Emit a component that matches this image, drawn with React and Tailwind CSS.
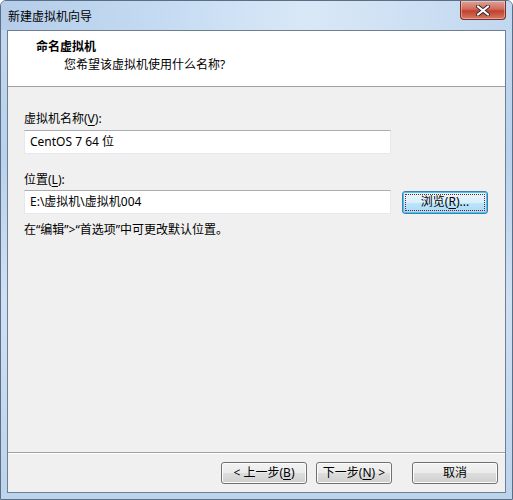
const Key = ({ children }) => <span className="underline underline-offset-2">{children}</span>;

const WinButton = ({ children, className = '' }) => (
  <button
    type="button"
    className={`h-[22px] rounded-[3px] border border-[#707070] bg-[linear-gradient(#f2f2f2_0%,#ebebeb_50%,#dddddd_51%,#cfcfcf_100%)] text-[12px] leading-none text-black shadow-[inset_0_0_0_1px_#fcfcfc] ${className}`}
  >
    {children}
  </button>
);

const TextBox = ({ value }) => (
  <div className="flex h-[24px] w-[367px] items-center border border-[#e3e9ef] border-t-[#abadb3] bg-white px-[5px] text-[12px] text-black">
    {value}
  </div>
);

export default function App() {
  return (
    <div
      className="relative h-[500px] w-[513px] overflow-hidden rounded-t-[6px] border border-[#5a6f86] bg-[linear-gradient(180deg,#c6daf0_0%,#b9d1ec_30%,#cfe0f3_60%,#bcd3ec_100%)] text-[12px]"
      style={{ fontFamily: '"Noto Sans", "Noto Sans CJK SC", sans-serif' }}
    >
      {/* title bar */}
      <div className="flex h-[29px] items-center justify-between bg-[linear-gradient(90deg,#b5cde9_0%,#c4daf2_30%,#d9e8f7_60%,#c1d7ef_100%)]">
        <span className="pl-[7px] pt-[2px] text-[12px] text-black">新建虚拟机向导</span>
        <div className="mb-[10px] mr-[6px] flex h-[19px] w-[46px] items-center justify-center self-start rounded-b-[4px] border border-t-0 border-[#7a2f2a] bg-[linear-gradient(#e0a197_0%,#d06b5c_45%,#c0402e_55%,#d57a62_100%)] shadow-[inset_0_0_0_1px_rgba(255,255,255,0.35)]">
          <svg width="14" height="11" viewBox="0 0 14 11">
            <path d="M2 1.5 L12 9.5 M12 1.5 L2 9.5" stroke="#3a2a2a" strokeWidth="4" strokeLinecap="round" />
            <path d="M2 1.5 L12 9.5 M12 1.5 L2 9.5" stroke="#ffffff" strokeWidth="2.2" strokeLinecap="round" />
          </svg>
        </div>
      </div>

      {/* client area */}
      <div className="mx-[6px] flex h-[463px] flex-col border border-[#6f7f91] bg-[#f0f0f0]">
        {/* header */}
        <div className="h-[56px] border-b border-[#a0a0a0] bg-white pl-[28px] pt-[7px]">
          <div className="text-[12px] font-bold leading-[18px] text-black">命名虚拟机</div>
          <div className="pl-[28px] text-[12px] leading-[18px] text-black">您希望该虚拟机使用什么名称?</div>
        </div>

        {/* body */}
        <div className="flex flex-1 flex-col pl-[16px]">
          <div className="mt-[24px] leading-[16px]">
            虚拟机名称(<Key>V</Key>):
          </div>
          <div className="mt-[3px]">
            <TextBox value="CentOS 7 64 位" />
          </div>

          <div className="mt-[18px] leading-[16px]">
            位置(<Key>L</Key>):
          </div>
          <div className="mt-[2px] flex items-center gap-[11px]">
            <TextBox value="E:\虚拟机\虚拟机004" />
            <button
              type="button"
              className="flex h-[23px] w-[86px] items-center justify-center rounded-[3px] border border-[#3c7fb1] bg-[linear-gradient(#eaf6fd_0%,#d9f0fc_50%,#bee6fd_51%,#a7d9f5_100%)] p-[2px] text-[12px] leading-none text-black shadow-[inset_0_0_0_1px_#48c7f0]"
            >
              <span className="flex h-full w-full items-center justify-center border border-dotted border-[#8a1a1a]">
                浏览(<Key>R</Key>)...
              </span>
            </button>
          </div>
          <div className="mt-[8px] leading-[16px]">在“编辑”&gt;“首选项”中可更改默认位置。</div>
        </div>

        {/* footer */}
        <div className="h-[40px] border-t border-[#a0a0a0] shadow-[inset_0_1px_0_#ffffff]">
          <div className="flex justify-end gap-[10px] pr-[7px] pt-[9px]">
            <div className="flex">
              <WinButton className="w-[86px]">
                &lt; 上一步(<Key>B</Key>)
              </WinButton>
              <WinButton className="ml-[9px] w-[76px]">
                下一步(<Key>N</Key>) &gt;
              </WinButton>
            </div>
            <WinButton className="ml-[10px] w-[86px]">取消</WinButton>
          </div>
        </div>
      </div>
    </div>
  );
}
